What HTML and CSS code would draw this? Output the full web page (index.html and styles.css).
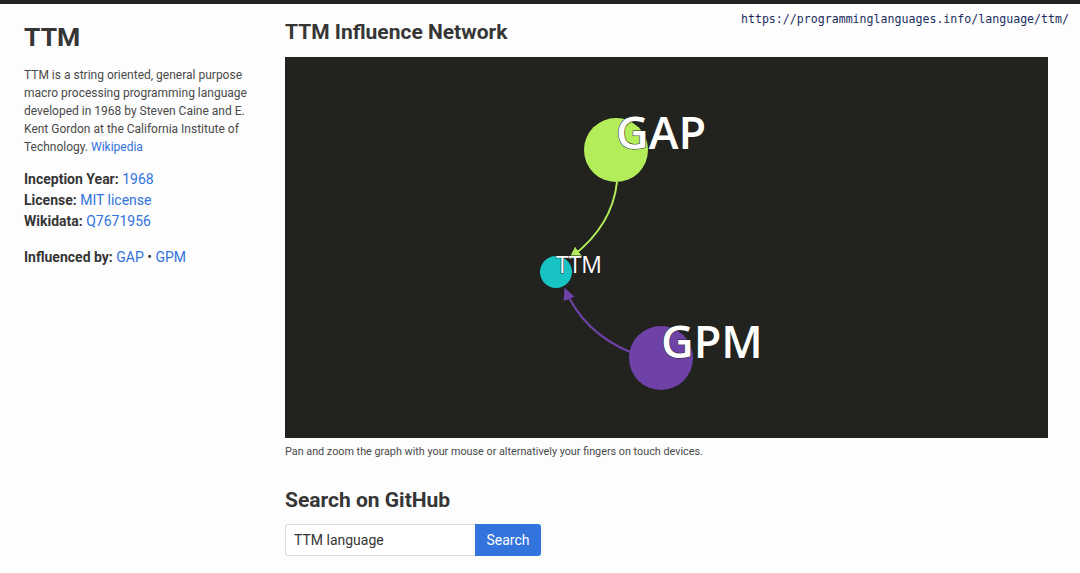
FILE: index.html
```html
<!DOCTYPE html>
<html>
<head>
<meta charset="utf-8">
<link rel="stylesheet" href="styles.css">
</head>
<body>
<div class="topbar"></div>
<div class="url">https://programminglanguages.info/language/ttm/</div>
<div class="page">
  <aside class="sidebar">
    <h1 class="title">TTM</h1>
    <p class="desc">TTM is a string oriented, general purpose macro processing programming language developed in 1968 by Steven Caine and E. Kent Gordon at the California Institute of Technology. <a href="#">Wikipedia</a></p>
    <div class="facts">
      <div><b>Inception Year:</b> <a href="#">1968</a></div>
      <div><b>License:</b> <a href="#">MIT license</a></div>
      <div><b>Wikidata:</b> <a href="#">Q7671956</a></div>
    </div>
    <div class="influenced"><b>Influenced by:</b> <a href="#">GAP</a> • <a href="#">GPM</a></div>
  </aside>
  <main class="main">
    <h2 class="heading">TTM Influence Network</h2>
    <div class="graph">
      <svg width="763" height="381" viewBox="0 0 763 381">
        <defs>
          <marker id="ag" viewBox="0 0 10 10" refX="9" refY="5" markerWidth="6" markerHeight="6" orient="auto">
            <path d="M0,0 L10,5 L0,10 z" fill="#b3ee5a"/>
          </marker>
          <marker id="ap" viewBox="0 0 10 10" refX="9" refY="5" markerWidth="6" markerHeight="6" orient="auto">
            <path d="M0,0 L10,5 L0,10 z" fill="#6f42a8"/>
          </marker>
        </defs>
        <path d="M332,125 Q327,170 285,201" fill="none" stroke="#b3ee5a" stroke-width="2" marker-end="url(#ag)"/>
        <path d="M345,295 Q298,275 280,232" fill="none" stroke="#6f42a8" stroke-width="2" marker-end="url(#ap)"/>
        <circle cx="331" cy="93" r="32" fill="#b3ee5a"/>
        <circle cx="271" cy="215" r="16" fill="#17c3c3"/>
        <circle cx="376" cy="301" r="32" fill="#6f42a8"/>
        <text class="lbl big" x="331" y="92">GAP</text>
        <text class="lbl small" x="271" y="216">TTM</text>
        <text class="lbl big" x="376" y="301">GPM</text>
      </svg>
    </div>
    <p class="caption">Pan and zoom the graph with your mouse or alternatively your fingers on touch devices.</p>
    <h2 class="heading gh">Search on GitHub</h2>
    <form class="search">
      <input class="input" type="text" value="TTM language">
      <button class="btn" type="button">Search</button>
    </form>
  </main>
</div>
</body>
</html>
```
FILE: styles.css
```css
html, body {
  margin: 0;
  padding: 0;
  background: #fdfdfd;
  font-family: Roboto, "Liberation Sans", sans-serif;
  color: #363636;
}
.topbar {
  height: 4px;
  background: #22221f;
}
.url {
  position: absolute;
  top: 11px;
  right: 11px;
  font-family: "DejaVu Sans Mono", monospace;
  font-size: 11.6px;
  color: #1b2c5e;
  line-height: 16px;
}
.page {
  display: flex;
  padding-left: 24px;
}
.sidebar {
  width: 237px;
  flex: none;
}
.title {
  font-size: 26.5px;
  font-weight: 700;
  margin: 15px 0 0;
  line-height: 36px;
  color: #363636;
}
.desc {
  font-size: 12px;
  line-height: 18px;
  color: #4a4a4a;
  margin: 11px 0 0;
}
a {
  color: #3273dc;
  text-decoration: none;
}
.facts {
  margin-top: 13px;
  font-size: 14px;
  line-height: 21px;
}
.facts b, .influenced b {
  color: #363636;
  font-weight: 700;
}
.influenced {
  margin-top: 15px;
  font-size: 14px;
  line-height: 21px;
}
.main {
  margin-left: 24px;
  width: 763px;
}
.heading {
  font-size: 21px;
  font-weight: 700;
  margin: 14px 0 0;
  line-height: 28px;
  color: #363636;
}
.graph {
  margin-top: 11px;
  width: 763px;
  height: 381px;
  background: #22221f;
}
.graph svg {
  display: block;
}
.lbl {
  fill: #fff;
  stroke: #22221f;
  stroke-width: 1px;
  paint-order: stroke;
  font-family: "Open Sans", sans-serif;
}
.big {
  font-size: 45px;
  font-weight: 600;
}
.small {
  font-size: 23px;
  font-weight: 500;
}
.caption {
  font-size: 10.8px;
  color: #4a4a4a;
  margin: 7px 0 0;
  line-height: 14px;
}
.gh {
  margin-top: 27px;
}
.search {
  display: flex;
  margin-top: 10px;
}
.input {
  width: 190px;
  height: 32px;
  box-sizing: border-box;
  border: 1px solid #dbdbdb;
  border-right: none;
  border-radius: 3px 0 0 3px;
  padding: 0 8px;
  font-family: Roboto, sans-serif;
  font-size: 14px;
  color: #363636;
  background: #fff;
  outline: none;
}
.btn {
  height: 32px;
  width: 66px;
  border: none;
  border-radius: 0 3px 3px 0;
  background: #3273dc;
  color: #fff;
  font-family: Roboto, sans-serif;
  font-size: 14px;
  padding: 0;
}
```
